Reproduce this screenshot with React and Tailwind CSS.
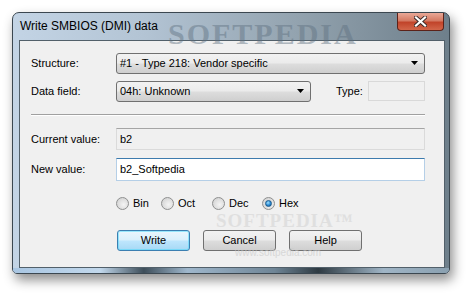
import React, { useState } from 'react';

const ui = { fontFamily: '"Liberation Sans", Arial, sans-serif' };

function Combo({ text, className }) {
    return (
        <div className={`h-[21px] flex items-center justify-between rounded-[3px] border border-[#707070] bg-[linear-gradient(180deg,#f2f2f2_0%,#ebebeb_48%,#dddddd_52%,#cfcfcf_100%)] pl-[3px] pr-[5px] text-[11px] text-black ${className}`}>
            <span>{text}</span>
            <svg width="8" height="5" viewBox="0 0 8 5"><path d="M0 0h7L3.5 4z" fill="#000" /></svg>
        </div>
    );
}

function Radio({ label, checked, onClick, className }) {
    return (
        <button onClick={onClick} className={`flex items-center gap-[4px] text-[11px] text-black ${className}`}>
            <span className="w-[13px] h-[13px] rounded-full border border-[#8e8f8f] bg-[radial-gradient(circle_at_60%_60%,#f4f4f4_0%,#dcdcdc_60%,#cbcbcb_100%)] flex items-center justify-center">
                {checked && <span className="w-[7px] h-[7px] rounded-full bg-[radial-gradient(circle_at_40%_35%,#9ee0ff_0%,#2a8ad4_55%,#0b4f8a_100%)] border border-[#1b5a8c]" />}
            </span>
            {label}
        </button>
    );
}

function Btn({ children, primary }) {
    return (
        <button className={`w-[73px] h-[21px] rounded-[3px] border text-[11px] text-black ${primary
            ? 'border-[#3c7fb1] bg-[linear-gradient(180deg,#eaf6fd_0%,#d9f0fc_48%,#bee6fd_52%,#a7d9f5_100%)] shadow-[inset_0_0_0_1px_#48d8fb80]'
            : 'border-[#707070] bg-[linear-gradient(180deg,#f2f2f2_0%,#ebebeb_48%,#dddddd_52%,#cfcfcf_100%)]'}`}>
            {children}
        </button>
    );
}

export default function App() {
    const [base, setBase] = useState('Hex');
    const [value, setValue] = useState('b2_Softpedia');

    return (
        <div className="w-[471px] h-[296px] bg-white pl-[12px] pt-[12px] overflow-hidden" style={ui}>
            <div className="relative w-[438px] h-[262px] flex flex-col rounded-t-[7px] rounded-b-[5px] border border-[#3b4750] bg-[linear-gradient(90deg,#c3d4e5_0%,#b3c4d4_30%,#93a3af_65%,#6e7f8b_100%)] shadow-[3px_6px_12px_rgba(0,0,0,0.45)]">

                {/* Title bar */}
                <div className="h-[27px] flex items-start justify-between pl-[7px] pr-[5px]">
                    <span className="self-center text-[12px] text-black">Write SMBIOS (DMI) data</span>
                    <button className="w-[47px] h-[18px] rounded-b-[4px] border border-t-0 border-[#5c2219] bg-[linear-gradient(180deg,#e9a897_0%,#d47a63_45%,#c1442a_55%,#d2664a_100%)] flex items-center justify-center">
                        <svg width="13" height="11" viewBox="0 0 13 11">
                            <path d="M2 1.5l9 8M11 1.5l-9 8" stroke="#3a2a28" strokeWidth="4" strokeLinecap="square" />
                            <path d="M2 1.5l9 8M11 1.5l-9 8" stroke="#fff" strokeWidth="2.2" strokeLinecap="square" />
                        </svg>
                    </button>
                </div>
                <span className="absolute left-[155px] top-[-2px] text-[30px] font-bold tracking-[2px] text-[#5f7181] opacity-45 pointer-events-none" style={{ fontFamily: '"Liberation Serif", serif' }}>SOFTPEDIA</span>

                {/* Client area */}
                <div className="ml-[6px] w-[426px] h-[229px] border border-[#52606a] bg-[#f0f0f0] flex flex-col pl-[11px] pr-[19px] pt-[12px] text-[11px] text-black">
                    <div className="flex items-center">
                        <span className="w-[85px]">Structure:</span>
                        <Combo text="#1 - Type 218: Vendor specific" className="flex-1" />
                    </div>
                    <div className="flex items-center mt-[7px] h-[21px]">
                        <span className="w-[85px]">Data field:</span>
                        <Combo text="04h: Unknown" className="w-[195px]" />
                        <span className="ml-[25px] w-[32px]">Type:</span>
                        <div className="ml-auto w-[57px] h-[20px] border border-[#d9d9d9] bg-[#f0f0f0]" />
                    </div>
                    <div className="mt-[12px] border-t border-[#a0a0a0] border-b border-b-white" />
                    <div className="flex items-center mt-[12px]">
                        <span className="w-[85px]">Current value:</span>
                        <div className="flex-1 h-[22px] border border-[#dadada] border-t-[#a5a5a5] bg-[#f0f0f0] flex items-center pl-[3px]">b2</div>
                    </div>
                    <div className="flex items-center mt-[8px]">
                        <span className="w-[85px]">New value:</span>
                        <input
                            value={value}
                            onChange={(e) => setValue(e.target.value)}
                            className="flex-1 h-[23px] border border-[#b5cfe7] border-t-[#3d7bad] bg-white pl-[3px] text-[11px] outline-none"
                        />
                    </div>
                    <div className="flex items-center mt-[16px] pl-[85px] h-[13px]">
                        <Radio label="Bin" className="w-[45px]" checked={base === 'Bin'} onClick={() => setBase('Bin')} />
                        <Radio label="Oct" className="w-[51px]" checked={base === 'Oct'} onClick={() => setBase('Oct')} />
                        <Radio label="Dec" className="w-[50px]" checked={base === 'Dec'} onClick={() => setBase('Dec')} />
                        <Radio label="Hex" checked={base === 'Hex'} onClick={() => setBase('Hex')} />
                    </div>
                    <div className="flex items-center gap-[13px] mt-[20px] pl-[86px]">
                        <Btn primary>Write</Btn>
                        <Btn>Cancel</Btn>
                        <Btn>Help</Btn>
                    </div>
                </div>

                {/* watermark over client */}
                <span className="absolute left-[203px] top-[199px] text-[19px] leading-[18px] font-bold tracking-[1px] text-[#c8c8c8] opacity-40 pointer-events-none" style={{ fontFamily: '"Liberation Serif", serif' }}>SOFTPEDIA™</span>
                <span className="absolute left-[222px] top-[235px] text-[10px] leading-[10px] text-[#c8c8c8] opacity-60 pointer-events-none">www.softpedia.com</span>

                {/* bottom frame */}
                <div className="mt-auto h-[5px] bg-[linear-gradient(90deg,#a9c6e2_0%,#c2d8ec_20%,#3e4e5a_30%,#9fb7cc_40%,#6f8596_60%,#2e3a42_70%,#a0b5c6_85%,#8aa0b0_100%)] rounded-b-[4px]" />
            </div>
        </div>
    );
}
